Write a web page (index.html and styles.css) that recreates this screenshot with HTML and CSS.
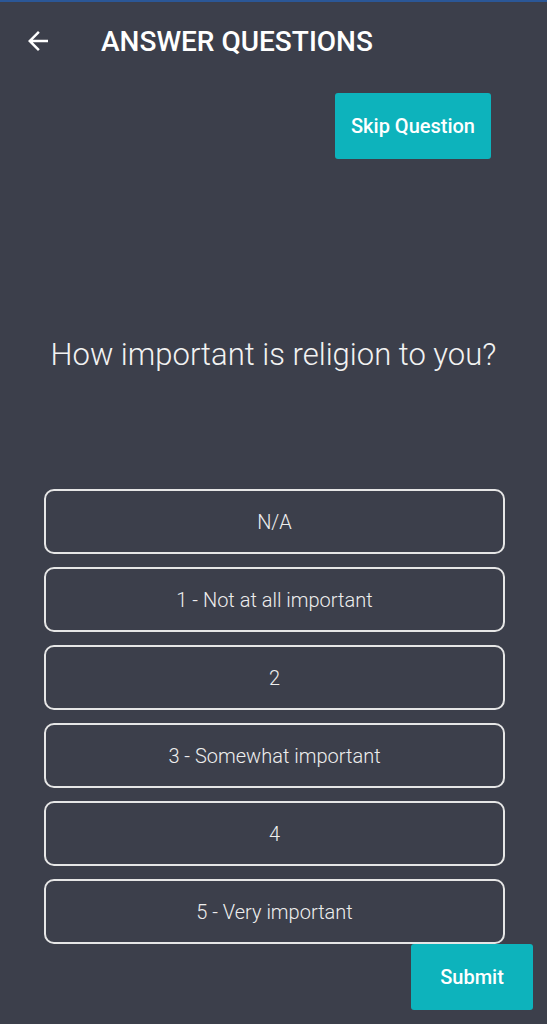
FILE: index.html
```html
<!DOCTYPE html>
<html>
<head>
<meta charset="utf-8">
<link rel="stylesheet" href="styles.css">
</head>
<body>
<div class="screen">
  <header class="topbar">
    <svg class="back" width="24" height="24" viewBox="0 0 24 24"><path d="M20 11H7.83l5.59-5.59L12 4l-8 8 8 8 1.41-1.41L7.83 13H20v-2z" fill="#ffffff"/></svg>
    <h1 class="title">ANSWER QUESTIONS</h1>
  </header>
  <div class="skip-row">
    <button class="btn skip">Skip Question</button>
  </div>
  <p class="question">How important is religion to you?</p>
  <div class="options">
    <div class="option">N/A</div>
    <div class="option">1 - Not at all important</div>
    <div class="option">2</div>
    <div class="option">3 - Somewhat important</div>
    <div class="option">4</div>
    <div class="option">5 - Very important</div>
  </div>
  <div class="submit-row">
    <button class="btn submit">Submit</button>
  </div>
</div>
</body>
</html>
```

FILE: styles.css
```css
html, body {
  margin: 0;
  padding: 0;
  background: #3c3f4b;
}
body {
  font-family: Roboto, "Liberation Sans", sans-serif;
  color: #ffffff;
}
.screen {
  width: 547px;
  height: 1024px;
  border-top: 2px solid #2b5797;
  box-sizing: border-box;
  display: flex;
  flex-direction: column;
  overflow: hidden;
}
.topbar {
  height: 78px;
  display: flex;
  align-items: center;
  padding-left: 23px;
}
.back {
  width: 30px;
  height: 30px;
  flex: none;
}
.title {
  margin: 0 0 0 48px;
  font-size: 28px;
  font-weight: 500;
  letter-spacing: 0;
}
.skip-row {
  display: flex;
  justify-content: flex-end;
  padding: 13px 56px 0 0;
}
.btn {
  border: none;
  border-radius: 3px;
  background: #0db3bc;
  color: #ffffff;
  font-family: Roboto, "Liberation Sans", sans-serif;
  font-weight: 500;
  font-size: 20px;
  height: 66px;
  padding: 0;
}
.skip {
  width: 156px;
}
.question {
  margin: 176px 0 0 0;
  text-align: center;
  font-size: 31px;
  font-weight: 300;
  line-height: 40px;
  color: #f2f2f2;
}
.options {
  margin: 114px 42px 0 44px;
  display: flex;
  flex-direction: column;
  gap: 13px;
}
.option {
  height: 65px;
  box-sizing: border-box;
  border: 2px solid #e6e6e6;
  border-radius: 10px;
  display: flex;
  align-items: center;
  justify-content: center;
  font-size: 20px;
  font-weight: 300;
  color: #eeeeee;
}
.submit-row {
  display: flex;
  justify-content: flex-end;
  padding-right: 14px;
}
.submit {
  width: 122px;
}
```
